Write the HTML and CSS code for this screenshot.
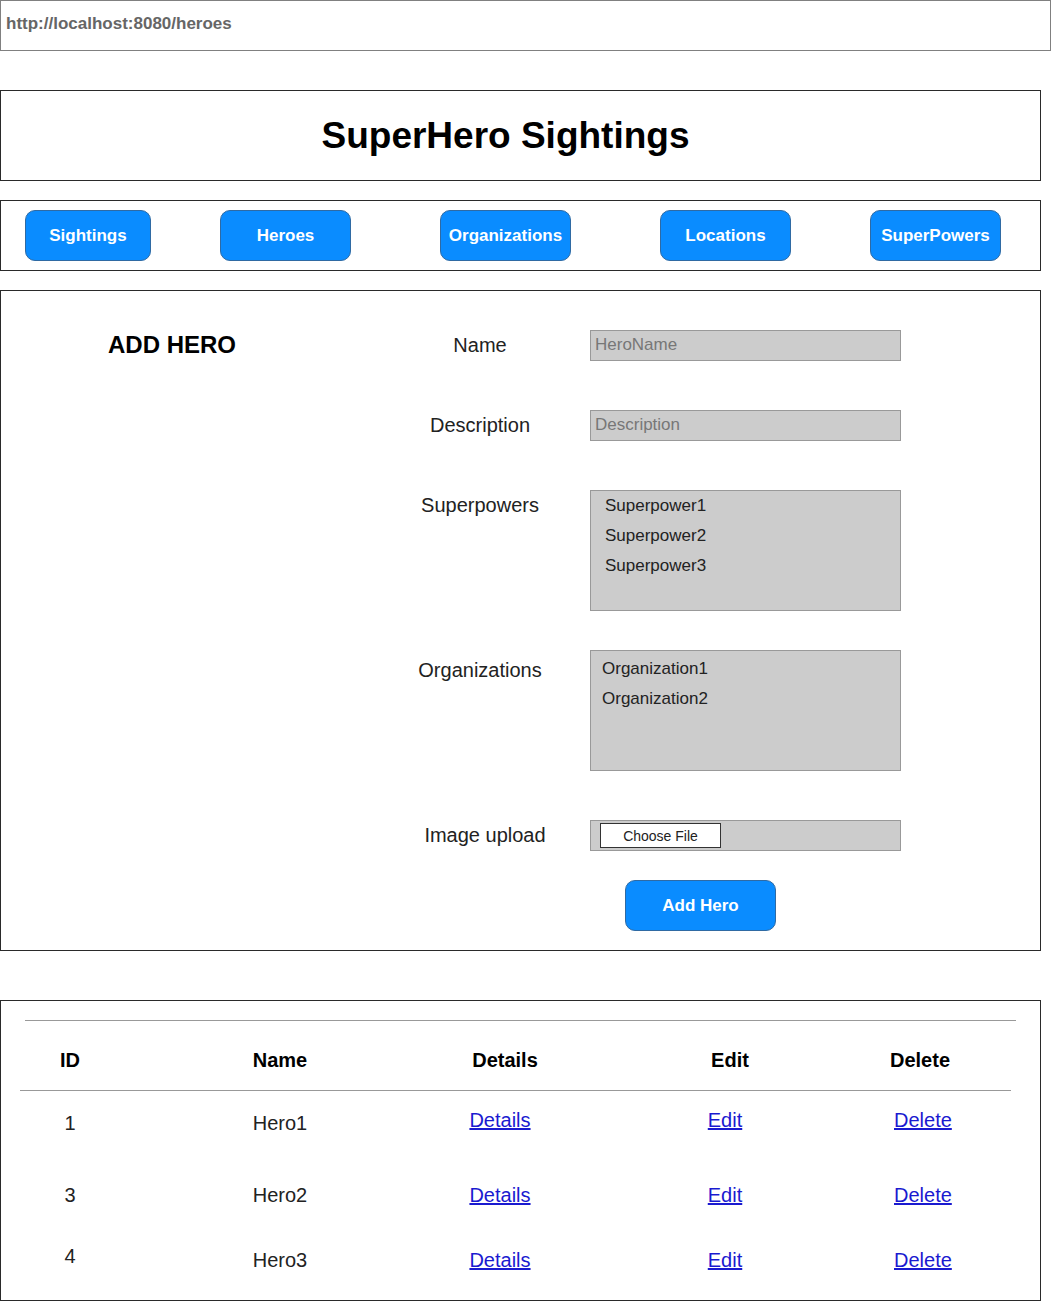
FILE: index.html
```html
<!DOCTYPE html>
<html lang="en">
<head>
<meta charset="utf-8">
<title>SuperHero Sightings</title>
<link rel="stylesheet" href="styles.css">
</head>
<body>
<div class="url-bar">http://localhost:8080/heroes</div>

<header class="box header-box">
  <h1 class="site-title">SuperHero Sightings</h1>
</header>

<nav class="box nav-box">
  <a class="btn nav-btn nav-sightings">Sightings</a>
  <a class="btn nav-btn nav-heroes">Heroes</a>
  <a class="btn nav-btn nav-orgs">Organizations</a>
  <a class="btn nav-btn nav-locations">Locations</a>
  <a class="btn nav-btn nav-powers">SuperPowers</a>
</nav>

<section class="box form-box">
  <div class="form-title-col">
    <h2 class="form-title">ADD HERO</h2>
  </div>
  <div class="fields">
    <div class="field-row row-name">
      <label class="field-label">Name</label>
      <div class="input input-short">HeroName</div>
    </div>
    <div class="field-row row-desc">
      <label class="field-label">Description</label>
      <div class="input input-short">Description</div>
    </div>
    <div class="field-row row-powers">
      <label class="field-label">Superpowers</label>
      <div class="input input-list list-powers">
        <div class="list-item">Superpower1</div>
        <div class="list-item">Superpower2</div>
        <div class="list-item">Superpower3</div>
      </div>
    </div>
    <div class="field-row row-orgs">
      <label class="field-label label-orgs">Organizations</label>
      <div class="input input-list list-orgs">
        <div class="list-item">Organization1</div>
        <div class="list-item">Organization2</div>
      </div>
    </div>
    <div class="field-row row-image">
      <label class="field-label label-image">Image upload</label>
      <div class="input input-file">
        <span class="file-btn">Choose File</span>
      </div>
    </div>
    <div class="submit-row">
      <a class="btn submit-btn">Add Hero</a>
    </div>
  </div>
</section>

<section class="box table-box">
  <div class="rule rule-top"></div>
  <div class="trow thead">
    <div class="cell c-id">ID</div>
    <div class="cell c-name">Name</div>
    <div class="cell c-details">Details</div>
    <div class="cell c-edit">Edit</div>
    <div class="cell c-delete">Delete</div>
  </div>
  <div class="rule rule-head"></div>
  <div class="trow tbody-row row-1">
    <div class="cell c-id">1</div>
    <div class="cell c-name">Hero1</div>
    <div class="cell c-details link-cell"><a class="link" href="#">Details</a></div>
    <div class="cell c-edit link-cell"><a class="link" href="#">Edit</a></div>
    <div class="cell c-delete delete-cell"><a class="link" href="#">Delete</a></div>
  </div>
  <div class="trow tbody-row row-2">
    <div class="cell c-id">3</div>
    <div class="cell c-name">Hero2</div>
    <div class="cell c-details link-cell"><a class="link" href="#">Details</a></div>
    <div class="cell c-edit link-cell"><a class="link" href="#">Edit</a></div>
    <div class="cell c-delete delete-cell"><a class="link" href="#">Delete</a></div>
  </div>
  <div class="trow tbody-row row-3">
    <div class="cell c-id id-up">4</div>
    <div class="cell c-name">Hero3</div>
    <div class="cell c-details link-cell"><a class="link" href="#">Details</a></div>
    <div class="cell c-edit link-cell"><a class="link" href="#">Edit</a></div>
    <div class="cell c-delete delete-cell"><a class="link" href="#">Delete</a></div>
  </div>
</section>
</body>
</html>
```

FILE: styles.css
```css
* { box-sizing: border-box; }

html, body {
  margin: 0;
  padding: 0;
  background: #ffffff;
}

body {
  width: 1051px;
  font-family: "Liberation Sans", Arial, sans-serif;
  color: #222;
}

.url-bar {
  width: 1051px;
  height: 51px;
  border: 1px solid #808080;
  padding: 13px 0 0 5px;
  font-size: 17px;
  font-weight: bold;
  color: #666;
  line-height: 20px;
}

.box {
  width: 1041px;
  border: 1px solid #2a2a2a;
  background: #fff;
}

.header-box {
  margin-top: 39px;
  height: 91px;
  display: flex;
  align-items: center;
  justify-content: center;
}

.site-title {
  margin: 0 30px 0 0;
  font-size: 37px;
  font-weight: bold;
  color: #000;
  line-height: 40px;
}

.nav-box {
  margin-top: 19px;
  height: 71px;
  display: flex;
  align-items: flex-start;
  padding-top: 9px;
}

.btn {
  display: flex;
  align-items: center;
  justify-content: center;
  background: #0a8cff;
  border: 1px solid #2f6aa3;
  border-radius: 10px;
  color: #fff;
  font-weight: bold;
  font-size: 17px;
  text-decoration: none;
  height: 51px;
}

.nav-sightings { margin-left: 24px; width: 126px; }
.nav-heroes { margin-left: 69px; width: 131px; }
.nav-orgs { margin-left: 89px; width: 131px; }
.nav-locations { margin-left: 89px; width: 131px; }
.nav-powers { margin-left: 79px; width: 131px; }

.form-box {
  margin-top: 19px;
  height: 661px;
  display: flex;
  padding-top: 39px;
}

.form-title-col {
  width: 369px;
  padding-left: 107px;
}

.form-title {
  margin: 0;
  font-size: 24px;
  line-height: 30px;
  font-weight: bold;
  color: #000;
}

.fields {
  display: flex;
  flex-direction: column;
}

.field-row {
  display: flex;
  align-items: flex-start;
}

.field-label {
  width: 220px;
  text-align: center;
  font-size: 20px;
  line-height: 30px;
  color: #222;
}

.label-orgs { padding-top: 5px; }
.label-image { padding-left: 10px; }

.input {
  width: 311px;
  background: #cccccc;
  border: 1px solid #999;
  font-size: 17px;
}

.input-short {
  height: 31px;
  line-height: 27px;
  padding-left: 4px;
  color: #777;
}

.row-desc { margin-top: 49px; }
.row-powers { margin-top: 49px; }
.row-orgs { margin-top: 39px; }
.row-image { margin-top: 49px; }

.input-list {
  height: 121px;
  color: #222;
}

.list-powers { padding-left: 14px; }
.list-orgs { padding-left: 11px; padding-top: 3px; }

.list-item {
  line-height: 30px;
  height: 30px;
}

.input-file {
  height: 31px;
  display: flex;
  align-items: center;
  padding-left: 9px;
}

.file-btn {
  display: flex;
  align-items: center;
  justify-content: center;
  width: 121px;
  height: 25px;
  background: #fff;
  border: 1px solid #333;
  font-size: 14px;
  color: #222;
}

.submit-row {
  margin-top: 29px;
  padding-left: 255px;
}

.submit-btn {
  width: 151px;
}

.table-box {
  margin-top: 49px;
  height: 301px;
  padding-top: 19px;
}

.rule {
  height: 1px;
  background: #999;
}

.rule-top {
  margin-left: 24px;
  width: 991px;
}

.rule-head {
  margin-left: 19px;
  width: 991px;
}

.trow {
  display: grid;
  grid-template-columns: 100px 320px 130px 320px 60px;
  padding-left: 19px;
}

.thead {
  height: 69px;
  padding-top: 10px;
  align-items: center;
  font-weight: bold;
  font-size: 20px;
  color: #000;
}

.cell {
  text-align: center;
  font-size: 20px;
  white-space: nowrap;
}

.tbody-row {
  align-items: center;
  color: #222;
}

.row-1 { height: 64px; }
.row-2 { height: 80px; }
.row-3 { height: 50px; }

.link-cell { padding-right: 10px; }
.delete-cell { padding-left: 4px; }

.link {
  color: #1a1ad0;
  text-decoration: underline;
}

.row-1 .link-cell, .row-1 .delete-cell { margin-top: -6px; }
.id-up { margin-top: -8px; }
```
